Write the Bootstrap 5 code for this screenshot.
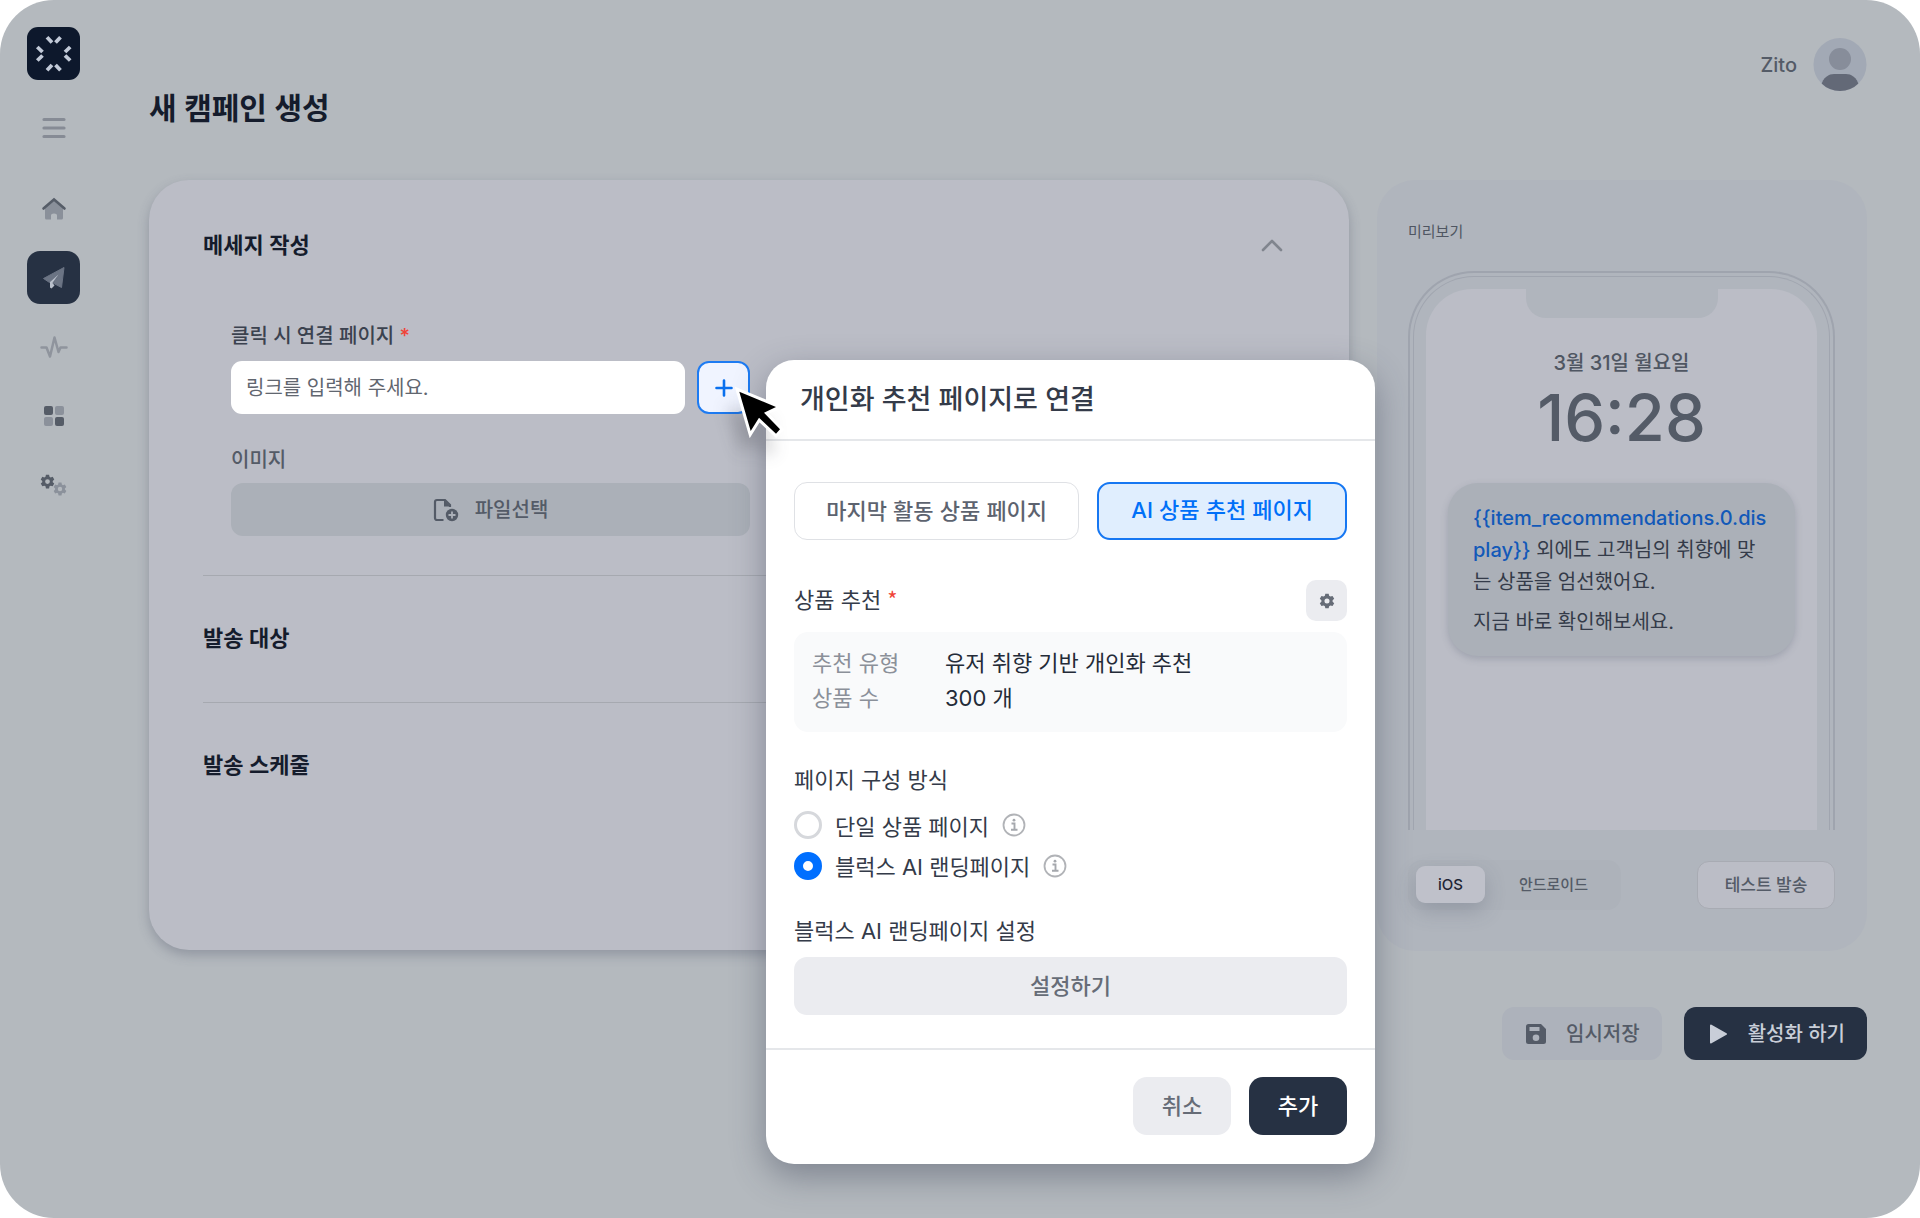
<!DOCTYPE html>
<html lang="ko">
<head>
<meta charset="utf-8">
<meta name="viewport" content="width=device-width, initial-scale=1">
<title>새 캠페인 생성</title>
<link href="https://cdn.jsdelivr.net/npm/bootstrap@5.3.0/dist/css/bootstrap.min.css" rel="stylesheet">
<style>
:root{--ink:#151c2c;--text:#3b424f;--muted:#545b67;--blue:#0070f8;--navy:#263143;--page:#b4b9be;--surface:#bbbdc6;--panel:#b0b5bd}
body{background:#fff;font-family:Inter,"Noto Sans CJK KR",sans-serif;font-size:20px;line-height:24px;color:var(--text)}
.shell{background:var(--page);border-radius:54px;min-height:100vh}
.side{width:107px;padding-top:27px}
.side-link{width:53px;height:53px;border-radius:13px;display:flex;align-items:center;justify-content:center;background:none;border:0;padding:0}
.side-link.on{background:var(--navy)}
.brand{width:53px;height:53px;border-radius:11px;background:#0d182c}
.burger{margin:21px 0 28px}
.side nav{gap:16px}
.workspace{padding:0 53px 0 42px}
.topbar{height:180px;padding-top:38px}
.topbar h1{font-size:30px;line-height:36px;font-weight:600;color:var(--ink);margin:52px 0 0}
.who{height:54px;gap:16px;color:var(--muted);font-weight:500}
.columns{gap:28px}
.editor{background:var(--surface);border-radius:40px;padding:47px 54px 0;min-height:770px;box-shadow:0 5px 12px rgba(70,78,98,.32);z-index:2}
.sec-title{font-size:22px;line-height:36px;font-weight:600;color:var(--ink);margin:0}
.fold-btn{width:46px;height:36px}
.fields{margin:61px 0 39px 28px;width:519px}
.fields label,.file-label{display:block;line-height:24px;font-weight:500}
.req{color:#f04438}
.link-row{margin-top:13px;gap:12px}
.link-row .form-control{height:53px;border:0;border-radius:11px;font-size:20px;padding:0 15px;color:var(--muted);box-shadow:none}
.link-row .form-control::placeholder{color:#61666f;opacity:1}
.plus{width:53px;height:53px;border:2px solid #1d7bf2;border-radius:12px;background:#f0f4ff;padding:0}
.file-label{margin:34px 0 11px;color:var(--muted)}
.file-btn{height:53px;border-radius:12px;background:#abb0b8;color:var(--muted);font-size:20px;font-weight:500;gap:16px;border:0}
.fold{border-top:1px solid #a6a9b0;padding:44px 0 46px}
.preview{width:490px;background:var(--panel);border-radius:38px;padding:40px 32px 0 31px;min-height:771px}
.preview h3{font-size:15px;line-height:24px;font-weight:400;color:#4f5662;margin:0 0 27px}
.phone{border:2px solid #9fa4ae;border-bottom:0;border-radius:66px 66px 0 0;padding:3px 3px 0;height:559px}
.phone-rim{border:1px solid #a0a5af;border-bottom:0;border-radius:61px 61px 0 0;padding:12px 12px 0;height:100%}
.screen{background:var(--surface);border-radius:46px 46px 0 0;height:100%;padding:0 22px}
.notch{width:192px;height:29px;background:var(--panel);border-radius:0 0 20px 20px;margin:0 auto 33px}
.day{font-weight:500;line-height:24px;color:#4f5662}
.clock{font-size:65px;line-height:80px;font-weight:500;color:#545b67;margin-top:3px}
.bubble{background:#abb0b8;border-radius:30px;margin-top:25px;padding:19px 24px 18px 25px;line-height:32px;color:#343b49;height:173px;box-shadow:0 3px 7px rgba(80,88,108,.25);word-break:break-all}
.bubble p{margin:0 0 8px}
.bubble .var{color:#1259b8;font-weight:500}
.preview-bar{padding-top:30px}
.switcher{background:#adb2ba;border-radius:14px;padding:6px 6px 6px 8px;height:50px}
.switcher button{border:0;background:none;font-size:15px;line-height:20px;color:var(--muted);height:37px;padding:0 27px 0 34px;font-weight:500}
.switcher button.on{background:#bfc1ca;color:#1e2534;border-radius:9px;padding:0 22px;box-shadow:0 8px 20px rgba(70,78,98,.25)}
.test-btn{background:var(--surface);border:1px solid #a8abb3;border-radius:12px;height:48px;width:138px;font-size:17px;font-weight:500;color:var(--muted);padding:0}
.actions{gap:22px;margin-top:56px}
.actions button{height:53px;border:0;border-radius:12px;font-size:20px;font-weight:500;padding:0 22px 0 24px;gap:20px}
.save{background:#adb2bb;color:var(--muted)}
.go{background:var(--navy);color:#c9ced8}
/* dialog */
.dialog{position:absolute;left:calc(100% + 16px);top:-1px;width:609px;background:#fff;border-radius:28px;box-shadow:0 12px 34px rgba(50,58,78,.42);font-family:"Noto Sans CJK KR",sans-serif;font-size:22px;line-height:35px;color:#343b49;z-index:5}
.latin{font-family:Inter,sans-serif}
.dialog header{height:81px;padding:0 34px;border-bottom:2px solid #e5e7ea}
.dialog h2{font-size:27px;line-height:36px;font-weight:500;margin:0;font-family:Inter,"Noto Sans CJK KR",sans-serif}
.dialog .body{padding:41px 28px 33px}
.choices{gap:18px}
.choice{flex:286;height:58px;border-radius:13px;border:1px solid #dfe1e5;background:#fff;color:#5d636f;font-size:22px;font-weight:500;padding:0 0 4px}
.choice.on{flex:248;border:2px solid #1677f2;background:#e0eefe;color:var(--blue)}
.gear-btn{width:41px;height:41px;border:0;border-radius:10px;background:#ebecf0;padding:0}
.facts{background:#f9fafb;border-radius:14px;padding:12px 18px 16px;margin:11px 0 29px}
.facts dl{display:grid;grid-template-columns:133px 1fr;margin:0}
.facts dt{font-weight:400;color:#8b9099}
.facts dd{margin:0;color:#242b38}
.opt{height:41px;gap:13px}
.opt label{font-weight:400}
.opt .form-check-input{width:28px;height:28px;margin:0;border:3px solid #d6d8dc;background-image:none;box-shadow:none}
.opt .form-check-input:checked{border:9px solid #006fff;background:#fff}
.opts{margin:8px 0 26px}
.wide-btn{height:58px;border-radius:13px;border:0;background:#ebecf0;color:#666c77;font-size:22px;font-weight:500;padding:0 0 4px}
.dialog footer{border-top:2px solid #e5e7ea;padding:27px 28px 29px;gap:18px}
.dialog footer button{width:98px;height:58px;border:0;border-radius:14px;font-size:22px;font-weight:500;padding:0 0 4px}
.cancel{background:#ebecf0;color:#666c77}
.add{background:var(--navy);color:#fff}
.pointer{position:absolute;right:-36px;top:24px;z-index:6;filter:drop-shadow(-8px 18px 8px rgba(40,40,50,.22))}
</style>
<script src="https://cdn.jsdelivr.net/npm/bootstrap@5.3.0/dist/js/bootstrap.bundle.min.js"></script>
</head>
<body>
<svg width="0" height="0" class="position-absolute" aria-hidden="true">
  <symbol id="gear" viewBox="0 0 24 24"><path fill-rule="evenodd" d="M9.500 1h5l.7 3.300 1.900 1.100 3.200-1 2.500 4.300-2.400 2.300v2l2.400 2.300-2.500 4.300-3.200-1-1.900 1.100-.7 3.300h-5l-.7-3.300-1.900-1.100-3.200 1L1.200 15.300 3.600 13v-2L1.200 8.700l2.500-4.300 3.200 1 1.900-1.100zM12 8.200a3.800 3.800 0 1 0 0 7.600 3.800 3.800 0 1 0 0-7.600z"/></symbol>
  <symbol id="info" viewBox="0 0 24 24"><circle cx="12" cy="12" r="10.500" fill="none" stroke="#b1b3b7" stroke-width="1.800"/><path d="M9.500 10.500h3v6M9 16.700h6.500" fill="none" stroke="#a5a8ad" stroke-width="1.900"/><circle cx="12" cy="7.200" r="1.400" fill="#a5a8ad"/></symbol>
</svg>
<div class="shell d-flex">
  <aside class="side d-flex flex-column align-items-center flex-shrink-0">
    <a href="#" class="brand" aria-label="Blux">
      <svg width="53" height="53" viewBox="0 0 53 53" stroke="#c2cad8" stroke-width="3.800"><path d="M20 10.300l5 5.200M33.500 10.300l-5 5.200M43.200 20l-5.200 5M43.200 33.500l-5.200-5M33.500 43.200l-5-5.200M20 43.200l5-5.200M10.300 33.500l5.200-5M10.300 20l5.200 5"/></svg>
    </a>
    <button class="side-link burger" aria-label="메뉴"><svg width="24" height="22" stroke="#868b95" stroke-width="3.200" stroke-linecap="round"><path d="M2 2.500h20M2 11h20M2 19.500h20"/></svg></button>
    <nav class="d-flex flex-column">
      <a href="#" class="side-link" aria-label="홈"><svg width="26" height="24" viewBox="0 0 26 24"><path d="M4 11l9-8 9 8v10q0 1.500-1.500 1.500H16v-4q0-2-3-2t-3 2v4H5.500Q4 22.500 4 21z" fill="#8a909a"/><path d="M2.500 11.500L13 2.500l10.500 9" fill="none" stroke="#565d68" stroke-width="2.600" stroke-linecap="round"/></svg></a>
      <a href="#" class="side-link on" aria-label="캠페인"><svg width="24" height="24" viewBox="0 0 24 24"><path d="M22 1.500L1.500 12.500l6 4L16.500 9 11 17l8.500 4.500z" fill="#6b7484" stroke="#6b7484" stroke-linejoin="round"/><path d="M16.500 8.500L8 16v5.500l1.500 1 3-3L10.500 17z" fill="#b9c0cc"/></svg></a>
      <a href="#" class="side-link" aria-label="활동"><svg width="28" height="24" fill="none" stroke="#8f949d" stroke-width="2.500" stroke-linejoin="round" stroke-linecap="round"><path d="M1.500 12.500h5l3.500 9 4.500-19 4 14.500 2-4.500h6"/></svg></a>
      <a href="#" class="side-link" aria-label="보드"><svg width="20" height="20"><rect width="9" height="9" rx="2" x="0" y="0" fill="#555c67"/><rect width="9" height="9" rx="2" x="11" fill="#8b919b"/><rect width="9" height="9" rx="2" y="11" fill="#8b919b"/><rect width="9" height="9" rx="2" x="11" y="11" fill="#555c67"/></svg></a>
      <a href="#" class="side-link" aria-label="설정"><svg width="28" height="24"><use href="#gear" y="1" width="15" height="15" fill="#555c67"/><use href="#gear" x="13" y="9" width="14" height="14" fill="#8b919b"/></svg></a>
    </nav>
  </aside>
  <main class="workspace flex-grow-1">
    <div class="topbar d-flex justify-content-between align-items-start">
      <h1>새 캠페인 생성</h1>
      <div class="who d-flex align-items-center"><span>Zito</span>
        <svg width="54" height="54" viewBox="0 0 54 54"><clipPath id="c"><circle cx="27" cy="26.500" r="26.500"/></clipPath><g clip-path="url(#c)"><rect width="54" height="54" fill="#a2a9b5"/><circle cx="27" cy="21" r="11" fill="#878d9a"/><path d="M8 48c2-9 8-12 13-12h12c5 0 11 3 13 12v8H8z" fill="#636977"/></g></svg>
      </div>
    </div>
    <div class="columns d-flex align-items-start">
      <section class="editor position-relative flex-grow-1">
        <div class="d-flex justify-content-between align-items-center">
          <h2 class="sec-title">메세지 작성</h2>
          <button class="btn p-0 border-0 fold-btn d-flex align-items-center justify-content-center" aria-label="접기"><svg width="24" height="14" fill="none" stroke="#80858e" stroke-width="2.600" stroke-linecap="round" stroke-linejoin="round"><path d="M3 12l9-9 9 9"/></svg></button>
        </div>
        <div class="fields">
          <label for="link">클릭 시 연결 페이지 <span class="req">*</span></label>
          <div class="link-row d-flex position-relative">
            <input id="link" type="text" class="form-control" placeholder="링크를 입력해 주세요.">
            <button class="plus flex-shrink-0 d-flex align-items-center justify-content-center" aria-label="추가"><svg width="18" height="18" stroke="#0a70ee" stroke-width="2.600" stroke-linecap="round"><path d="M9 1.500v15M1.500 9h15"/></svg></button>
            <div class="dialog" role="dialog" aria-labelledby="dlg">
              <header class="d-flex align-items-center"><h2 id="dlg">개인화 추천 페이지로 연결</h2></header>
              <div class="body">
                <div class="choices d-flex mb-4">
                  <button class="choice">마지막 활동 상품 페이지</button>
                  <button class="choice on"><span class="latin">AI</span> 상품 추천 페이지</button>
                </div>
                <div class="d-flex justify-content-between align-items-center pt-3">
                  <span class="pb-1">상품 추천 <span class="req">*</span></span>
                  <button class="gear-btn" aria-label="설정"><svg width="16" height="16" fill="#666c77" class="d-block mx-auto"><use href="#gear"/></svg></button>
                </div>
                <div class="facts"><dl><dt>추천 유형</dt><dd>유저 취향 기반 개인화 추천</dd><dt>상품 수</dt><dd><span class="latin">300</span> 개</dd></dl></div>
                <div>페이지 구성 방식</div>
                <div class="opts">
                  <div class="opt d-flex align-items-center"><input class="form-check-input" type="radio" name="kind" id="k1"><label for="k1">단일 상품 페이지</label><svg width="24" height="24"><use href="#info"/></svg></div>
                  <div class="opt d-flex align-items-center"><input class="form-check-input" type="radio" name="kind" id="k2" checked><label for="k2">블럭스 <span class="latin">AI</span> 랜딩페이지</label><svg width="24" height="24"><use href="#info"/></svg></div>
                </div>
                <div class="mb-2">블럭스 <span class="latin">AI</span> 랜딩페이지 설정</div>
                <button class="wide-btn w-100">설정하기</button>
              </div>
              <footer class="d-flex justify-content-end"><button class="cancel">취소</button><button class="add">추가</button></footer>
            </div>
            <svg class="pointer" width="54" height="56" viewBox="0 0 54 56"><path d="M7.300 6.700L44 22 32 27.700 48 44.300 44 48.700 27 32.700 18.700 46z" fill="#000" stroke="#fff" stroke-width="6" paint-order="stroke"/></svg>
          </div>
          <div class="file-label" id="img-label">이미지</div>
          <button class="file-btn w-100 d-flex align-items-center justify-content-center" aria-describedby="img-label">
            <svg width="26" height="24" viewBox="0 0 26 24"><path d="M10.500 22H4a2 2 0 0 1-2-2V4a2 2 0 0 1 2-2h8l5 5v2" fill="none" stroke="#545b67" stroke-width="2.200"/><path d="M11 2l6.500 6.500H11z" fill="#545b67"/><circle cx="19" cy="17" r="6.200" fill="#545b67"/><path d="M19 13.500v7M15.500 17h7" stroke="#abb0b8" stroke-width="1.800"/></svg>파일선택</button>
        </div>
        <div class="fold"><h2 class="sec-title">발송 대상</h2></div>
        <div class="fold"><h2 class="sec-title">발송 스케줄</h2></div>
      </section>
      <aside class="preview flex-shrink-0">
        <h3>미리보기</h3>
        <div class="phone"><div class="phone-rim"><div class="screen">
          <div class="notch"></div>
          <div class="day text-center">3월 31일 월요일</div>
          <div class="clock text-center">16:28</div>
          <div class="bubble"><p><span class="var">{{item_recommendations.0.display}}</span> 외에도 고객님의 취향에 맞는 상품을 엄선했어요.</p><p>지금 바로 확인해보세요.</p></div>
        </div></div></div>
        <div class="preview-bar d-flex justify-content-between align-items-center">
          <div class="switcher d-flex"><button class="on">iOS</button><button>안드로이드</button></div>
          <button class="test-btn">테스트 발송</button>
        </div>
      </aside>
    </div>
    <div class="actions d-flex justify-content-end">
      <button class="save d-flex align-items-center"><svg width="20" height="20" viewBox="0 0 20 20"><path fill-rule="evenodd" d="M2.500 0H15l5 5v12.500a2.500 2.500 0 0 1-2.500 2.500h-15A2.500 2.500 0 0 1 0 17.500v-15A2.500 2.500 0 0 1 2.500 0zM3.500 3v4h10V3zM10 10.500a3.300 3.300 0 1 0 0 6.600 3.300 3.300 0 1 0 0-6.600z" fill="#545b67"/></svg>임시저장</button>
      <button class="go d-flex align-items-center"><svg width="20" height="20"><path d="M3 1.500L18 10 3 18.500z" fill="#c9ced8" stroke="#c9ced8" stroke-width="2" stroke-linejoin="round"/></svg>활성화 하기</button>
    </div>
  </main>
</div>
</body>
</html>
